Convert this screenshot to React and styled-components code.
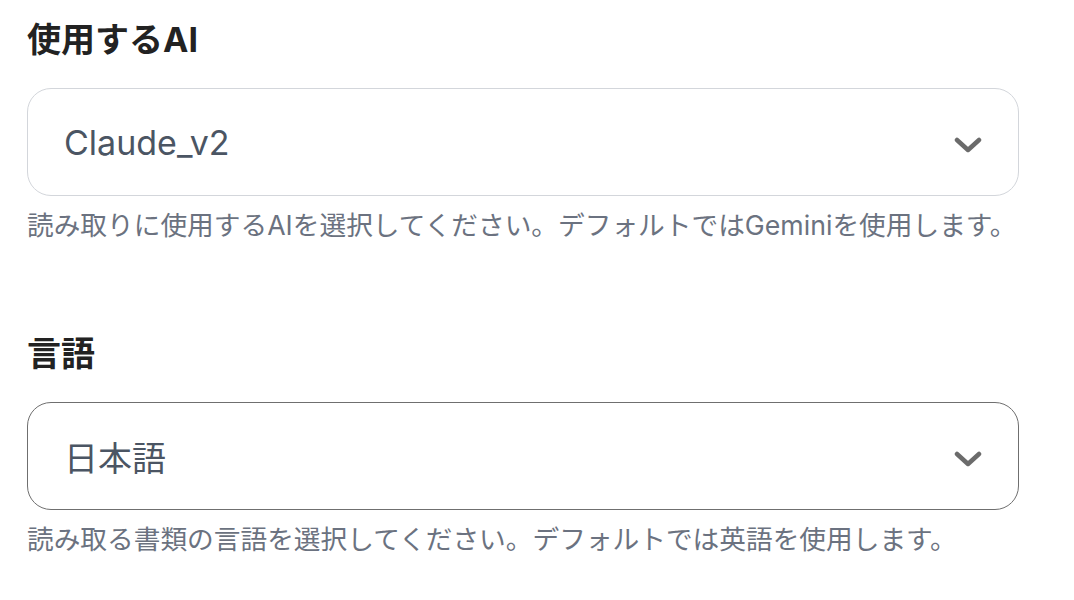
import styled, { createGlobalStyle } from "styled-components"

const GlobalStyle = createGlobalStyle`
  body {
    margin: 0;
    background: #ffffff;
    font-family: Inter, "Noto Sans CJK JP", sans-serif;
  }
`

const Page = styled.div`
  display: flex;
  flex-direction: column;
  gap: 85px;
  padding: 16px 55px 0 27px;
`

const Field = styled.div`
  display: flex;
  flex-direction: column;
  width: 992px;
`

const Label = styled.label`
  font-size: 34px;
  line-height: 48px;
  font-weight: 700;
  color: #222222;
  margin-bottom: 24px;
`

const SelectBox = styled.button`
  display: flex;
  align-items: center;
  justify-content: space-between;
  box-sizing: border-box;
  width: 100%;
  height: 108px;
  padding: 0 36px;
  background: #ffffff;
  border: 1.5px solid ${(p) => (p.$active ? "#6f6f6f" : "#d3d6db")};
  border-radius: 24px;
  font-family: inherit;
  cursor: pointer;
`

const Value = styled.span`
  font-size: 34px;
  color: #4b5563;
`

const Chevron = styled.svg`
  width: 28px;
  height: 16px;
  margin-top: 5px;
  color: #6b6b6b;
`

const Help = styled.p`
  margin: 10px 0 0;
  font-size: 26.7px;
  line-height: 39px;
  color: #6b7280;
  white-space: nowrap;
`

const fields = [
  {
    label: "使用するAI",
    value: "Claude_v2",
    help: "読み取りに使用するAIを選択してください。デフォルトではGeminiを使用します。",
  },
  {
    label: "言語",
    value: "日本語",
    help: "読み取る書類の言語を選択してください。デフォルトでは英語を使用します。",
    active: true,
  },
]

const App = () => {
  return (
    <>
      <GlobalStyle />
      <Page>
        {fields.map((f) => (
          <Field key={f.label}>
            <Label>{f.label}</Label>
            <SelectBox type="button" $active={f.active}>
              <Value>{f.value}</Value>
              <Chevron viewBox="0 0 28 16" fill="none">
                <polyline
                  points="3,3 14,13 25,3"
                  stroke="currentColor"
                  strokeWidth="4.5"
                  strokeLinecap="round"
                  strokeLinejoin="round"
                />
              </Chevron>
            </SelectBox>
            <Help>{f.help}</Help>
          </Field>
        ))}
      </Page>
    </>
  )
}

export default App
